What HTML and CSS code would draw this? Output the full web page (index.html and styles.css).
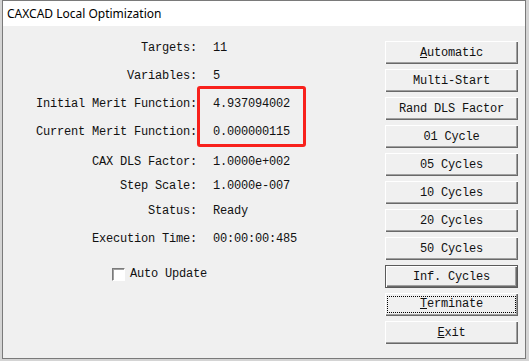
FILE: index.html
```html
<!DOCTYPE html>
<html lang="en">
<head>
	<meta charset="UTF-8">
	<title>CAXCAD Local Optimization</title>
	<link rel="stylesheet" href="styles.css">
</head>
<body>
	<section class="dlg">
		<div class="caption">CAXCAD Local Optimization</div>
		<div class="client">
			<div class="fields">
				<div class="row"><span class="lbl">Targets:</span><span class="val">11</span></div>
				<div class="row"><span class="lbl">Variables:</span><span class="val">5</span></div>
				<div class="row"><span class="lbl">Initial Merit Function:</span><span class="val">4.937094002</span></div>
				<div class="row"><span class="lbl">Current Merit Function:</span><span class="val">0.000000115</span></div>
				<div class="row wide"><span class="lbl">CAX DLS Factor:</span><span class="val">1.0000e+002</span></div>
				<div class="row tight"><span class="lbl">Step Scale:</span><span class="val">1.0000e-007</span></div>
				<div class="row mid"><span class="lbl">Status:</span><span class="val">Ready</span></div>
				<div class="row"><span class="lbl">Execution Time:</span><span class="val">00:00:00:485</span></div>
				<label class="check"><span class="box"></span>Auto Update</label>
				<div class="mark"></div>
			</div>
			<div class="btns">
				<button><u>A</u>utomatic</button>
				<button>Multi-Start</button>
				<button>Rand DLS Factor</button>
				<button>01 Cycle</button>
				<button>05 Cycles</button>
				<button>10 Cycles</button>
				<button>20 Cycles</button>
				<button>50 Cycles</button>
				<button class="default">Inf. Cycles</button>
				<button class="focus"><span><u>T</u>erminate</span></button>
				<button><u>E</u>xit</button>
			</div>
		</div>
	</section>
</body>
</html>
```

FILE: styles.css
```css
body, div, section, span, label {
	margin: 0;
	padding: 0;
}

body {
	background-color: #d4d4d4;
	width: 529px;
	height: 361px;
	overflow: hidden;
}

.dlg {
	width: 522px;
	height: 357px;
	margin-left: 2px;
	border: 1px solid #7a7a7a;
	background-color: #f0f0f0;
	display: flex;
	flex-direction: column;
}

.caption {
	height: 25px;
	background-color: #fff;
	font-family: "Noto Sans", sans-serif;
	font-size: 12px;
	line-height: 25px;
	padding-left: 4px;
	color: #000;
}

.client {
	flex: 1;
	display: flex;
	font-family: "Liberation Mono", monospace;
	font-size: 12px;
	letter-spacing: -0.2px;
	color: #111;
}

.fields {
	width: 382px;
	padding-top: 14px;
	position: relative;
}

.row {
	display: grid;
	grid-template-columns: 194px auto;
	column-gap: 16px;
	height: 16px;
	line-height: 16px;
	margin-top: 12px;
}

.row:first-child {
	margin-top: 0;
}

.row.wide {
	margin-top: 14px;
}

.row.tight {
	margin-top: 8px;
}

.row.mid {
	margin-top: 9px;
}

.lbl {
	text-align: right;
	white-space: pre;
}

.val {
	white-space: pre;
}

.check {
	display: flex;
	align-items: center;
	gap: 5px;
	height: 16px;
	margin-top: 19px;
	padding-left: 109px;
}

.check .box {
	width: 11px;
	height: 11px;
	background-color: #fff;
	border: 1px solid;
	border-color: #7a7a7a #fff #fff #7a7a7a;
	box-shadow: inset 1px 1px #a0a0a0;
}

/* red annotation frame */
.mark {
	position: absolute;
	left: 194px;
	top: 60px;
	width: 103px;
	height: 55px;
	border: 3px solid #f8211c;
	border-radius: 3px;
}

.btns {
	display: flex;
	flex-direction: column;
	gap: 5px;
	padding-top: 15px;
}

.btns button {
	width: 133px;
	height: 23px;
	padding: 0;
	border: none;
	background-color: #f0f0f0;
	font-family: "Liberation Mono", monospace;
	font-size: 12px;
	letter-spacing: -0.2px;
	color: #111;
	box-shadow: inset 1px 1px #fff, inset -1px -1px #696969, inset -2px -2px #a0a0a0;
}

.btns button.default {
	border: 1px solid #5a5a5a;
}

.btns button.focus span {
	display: block;
	margin: 0 3px;
	height: 15px;
	line-height: 15px;
	outline: 1px dotted #000;
}
```
